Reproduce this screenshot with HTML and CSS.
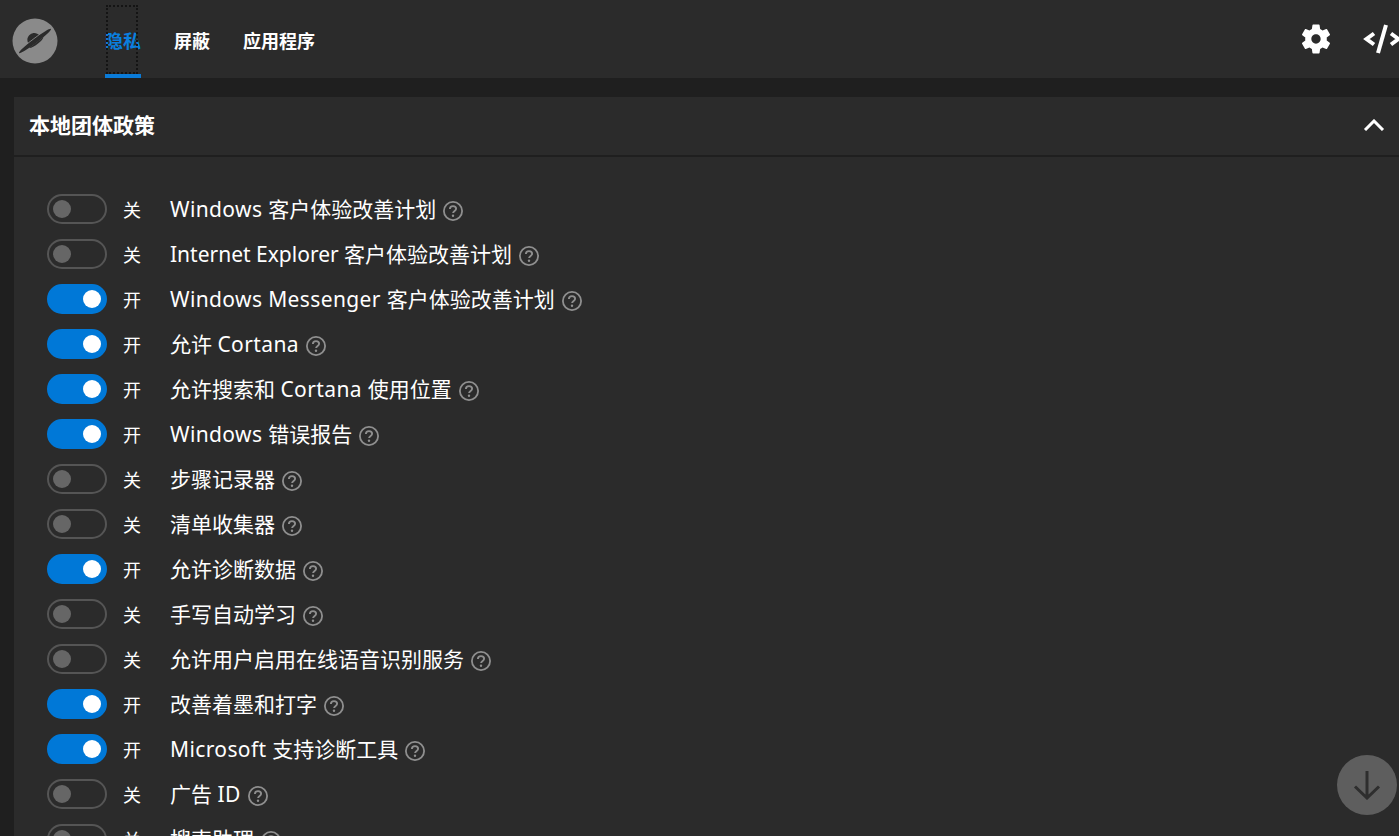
FILE: index.html
```html
<!DOCTYPE html>
<html lang="zh-CN">
<head>
<meta charset="utf-8">
<title>隐私</title>
<link rel="stylesheet" href="styles.css">
</head>
<body>
<svg class="defs" width="0" height="0" aria-hidden="true">
  <symbol id="help" viewBox="0 0 20 20">
    <circle cx="10" cy="10" r="9.1" fill="none" stroke="currentColor" stroke-width="1.8"/>
    <path d="M6.900 8c0-1.800 1.300-2.900 3.100-2.900 1.800 0 3.100 1.100 3.100 2.600 0 2.200-3 2.200-3 4.400" fill="none" stroke="currentColor" stroke-width="1.900"/>
    <circle cx="10" cy="14.800" r="1.200" fill="currentColor"/>
  </symbol>
</svg>
<header class="topbar">
  <div class="logo">
    <svg viewBox="0 0 46 46" width="46" height="46">
      <circle cx="23" cy="23" r="22.500" fill="#8a8a8a"/>
      <g transform="rotate(-37 23 23)" fill="#2b2b2b">
        <ellipse cx="23" cy="23" rx="20" ry="2.300"/>
        <path d="M16 22C16.500 17 19.500 15 23 15C26.500 15 29.500 17 30 22Z"/>
        <path d="M14 25C16 27.500 30 27.500 32 25Z"/>
        <path d="M15 20.500H31" stroke="#8a8a8a" stroke-width="0.800"/>
      </g>
    </svg>
  </div>
  <nav class="tabs">
    <a class="tab active"><span class="focus">隐私</span></a>
    <a class="tab">屏蔽</a>
    <a class="tab">应用程序</a>
  </nav>
  <div class="tools">
    <svg class="gear" viewBox="0 0 24 24" width="36" height="36"><path fill="#fff" d="M19.140 12.940c.04-.3.06-.61.06-.94 0-.32-.02-.64-.07-.94l2.030-1.580a.49.49 0 0 0 .12-.61l-1.920-3.320a.488.488 0 0 0-.59-.22l-2.390.96c-.5-.38-1.030-.7-1.620-.94l-.36-2.540a.484.484 0 0 0-.48-.41h-3.840c-.24 0-.43.17-.47.41l-.36 2.540c-.59.24-1.130.57-1.620.94l-2.390-.96c-.22-.08-.47 0-.59.22L2.740 8.870c-.12.21-.08.47.12.61l2.030 1.580c-.05.3-.09.63-.09.94s.02.64.07.94l-2.030 1.580a.49.49 0 0 0-.12.61l1.920 3.320c.12.22.37.29.59.22l2.390-.96c.5.38 1.030.7 1.620.94l.36 2.540c.05.24.24.41.48.41h3.840c.24 0 .44-.17.47-.41l.36-2.540c.59-.24 1.130-.56 1.620-.94l2.390.96c.22.08.47 0 .59-.22l1.920-3.320c.12-.22.07-.47-.12-.61l-2.010-1.580zM12 15.100c-1.710 0-3.100-1.390-3.100-3.100s1.390-3.100 3.100-3.100 3.100 1.390 3.100 3.100-1.390 3.100-3.100 3.100z"/></svg>
    <svg class="code" viewBox="0 0 38 30" width="38" height="30"><path d="M11 9.500 3.500 15 11 20.500M28 9.500l7.500 5.500-7.500 5.500" fill="none" stroke="#fff" stroke-width="4"/><path d="M23 1 15 29" fill="none" stroke="#fff" stroke-width="4"/></svg>
  </div>
</header>
<main class="page">
  <section class="card">
    <div class="card-head">
      <h2>本地团体政策</h2>
      <svg class="chev" viewBox="0 0 22 12" width="22" height="12"><path d="M2 11 11 2l9 9" fill="none" stroke="#fff" stroke-width="3"/></svg>
    </div>
    <div class="list">
      <div class="row"><span class="toggle"><i></i></span><span class="state">关</span><span class="name"><span class="en">Windows </span>客户体验改善计划</span><svg class="q"><use href="#help"/></svg></div>
      <div class="row"><span class="toggle"><i></i></span><span class="state">关</span><span class="name">Internet Explorer 客户体验改善计划</span><svg class="q"><use href="#help"/></svg></div>
      <div class="row"><span class="toggle on"><i></i></span><span class="state">开</span><span class="name"><span class="en">Windows Messenger </span>客户体验改善计划</span><svg class="q"><use href="#help"/></svg></div>
      <div class="row"><span class="toggle on"><i></i></span><span class="state">开</span><span class="name">允许 <span class="en">Cortana</span></span><svg class="q"><use href="#help"/></svg></div>
      <div class="row"><span class="toggle on"><i></i></span><span class="state">开</span><span class="name">允许搜索和 <span class="en">Cortana </span>使用位置</span><svg class="q"><use href="#help"/></svg></div>
      <div class="row"><span class="toggle on"><i></i></span><span class="state">开</span><span class="name"><span class="en">Windows </span>错误报告</span><svg class="q"><use href="#help"/></svg></div>
      <div class="row"><span class="toggle"><i></i></span><span class="state">关</span><span class="name">步骤记录器</span><svg class="q"><use href="#help"/></svg></div>
      <div class="row"><span class="toggle"><i></i></span><span class="state">关</span><span class="name">清单收集器</span><svg class="q"><use href="#help"/></svg></div>
      <div class="row"><span class="toggle on"><i></i></span><span class="state">开</span><span class="name">允许诊断数据</span><svg class="q"><use href="#help"/></svg></div>
      <div class="row"><span class="toggle"><i></i></span><span class="state">关</span><span class="name">手写自动学习</span><svg class="q"><use href="#help"/></svg></div>
      <div class="row"><span class="toggle"><i></i></span><span class="state">关</span><span class="name">允许用户启用在线语音识别服务</span><svg class="q"><use href="#help"/></svg></div>
      <div class="row"><span class="toggle on"><i></i></span><span class="state">开</span><span class="name">改善着墨和打字</span><svg class="q"><use href="#help"/></svg></div>
      <div class="row"><span class="toggle on"><i></i></span><span class="state">开</span><span class="name"><span class="en">Microsoft </span>支持诊断工具</span><svg class="q"><use href="#help"/></svg></div>
      <div class="row"><span class="toggle"><i></i></span><span class="state">关</span><span class="name">广告 <span class="en">ID</span></span><svg class="q"><use href="#help"/></svg></div>
      <div class="row"><span class="toggle"><i></i></span><span class="state">关</span><span class="name">搜索助理</span><svg class="q"><use href="#help"/></svg></div>
    </div>
  </section>
</main>
<button class="scroll-down" aria-label="向下">
  <svg viewBox="0 0 28 30" width="28" height="30"><path d="M14 1v27M2 16.500 14 28l12-11.500" fill="none" stroke="#2e2e2e" stroke-width="3"/></svg>
</button>
</body>
</html>
```
FILE: styles.css
```css
* { box-sizing: border-box; }
html, body { height: 836px; margin: 0; overflow: hidden; }
body {
  background: #1f1f1f;
  color: #fff;
  font-family: "Noto Sans", "Noto Sans CJK SC", sans-serif;
}
.defs { position: absolute; }
.topbar {
  height: 78px;
  background: #2b2b2b;
  display: flex;
  align-items: center;
  padding-left: 12px;
}
.logo { width: 46px; height: 46px; margin-top: 3px; flex: none; }
.logo svg { display: block; }
.tabs { display: flex; height: 78px; margin-left: 47px; }
.tab {
  display: flex;
  align-items: center;
  font-size: 18px;
  font-weight: 700;
  margin-right: 33px;
  padding-top: 1px;
}
.tab.active {
  color: #0a7fdf;
  border-bottom: 4px solid #0a7bd8;
  padding-top: 5px;
  padding-bottom: 0;
  position: relative;
}
.focus::after {
  content: "";
  position: absolute;
  left: 1px;
  right: 3px;
  top: 5px;
  bottom: 0;
  border: 2px dotted #141414;
}
.tools {
  margin-left: auto;
  margin-right: -2px;
  display: flex;
  align-items: center;
  gap: 29px;
  flex: none;
}
.gear, .code { flex: none; }
.page { padding: 19px 0 0 14px; }
.card { background: #2b2b2b; }
.card-head {
  height: 60px;
  border-bottom: 2px solid #1f1f1f;
  display: flex;
  align-items: center;
  justify-content: space-between;
  padding: 0 14px 4px 15px;
}
.card-head h2 { margin: 0; font-size: 21px; font-weight: 700; }
.chev { margin-top: 2px; }
.list { padding: 29px 0 0 33px; }
.row { display: flex; align-items: center; height: 45px; }
.toggle {
  width: 60px;
  height: 30px;
  border-radius: 15px;
  border: 2px solid #555;
  display: flex;
  align-items: center;
  padding: 0 4px;
  flex: none;
}
.toggle i {
  width: 18px;
  height: 18px;
  border-radius: 50%;
  background: #666;
}
.toggle.on {
  background: #0078d7;
  border-color: #0078d7;
  justify-content: flex-end;
}
.toggle.on i { background: #fff; }
.state { width: 63px; padding-left: 16px; font-size: 18px; flex: none; }
.name { font-size: 21px; white-space: nowrap; margin-top: -2px; }
.en { letter-spacing: .38px; }
.q { width: 20px; height: 20px; margin: 4px 0 0 7px; color: #8f8f8f; flex: none; }
.scroll-down {
  position: fixed;
  left: 1337px;
  top: 755px;
  width: 60px;
  height: 60px;
  border-radius: 50%;
  border: 0;
  padding: 0;
  background: #5e5e5e;
  display: flex;
  align-items: center;
  justify-content: center;
}
```
